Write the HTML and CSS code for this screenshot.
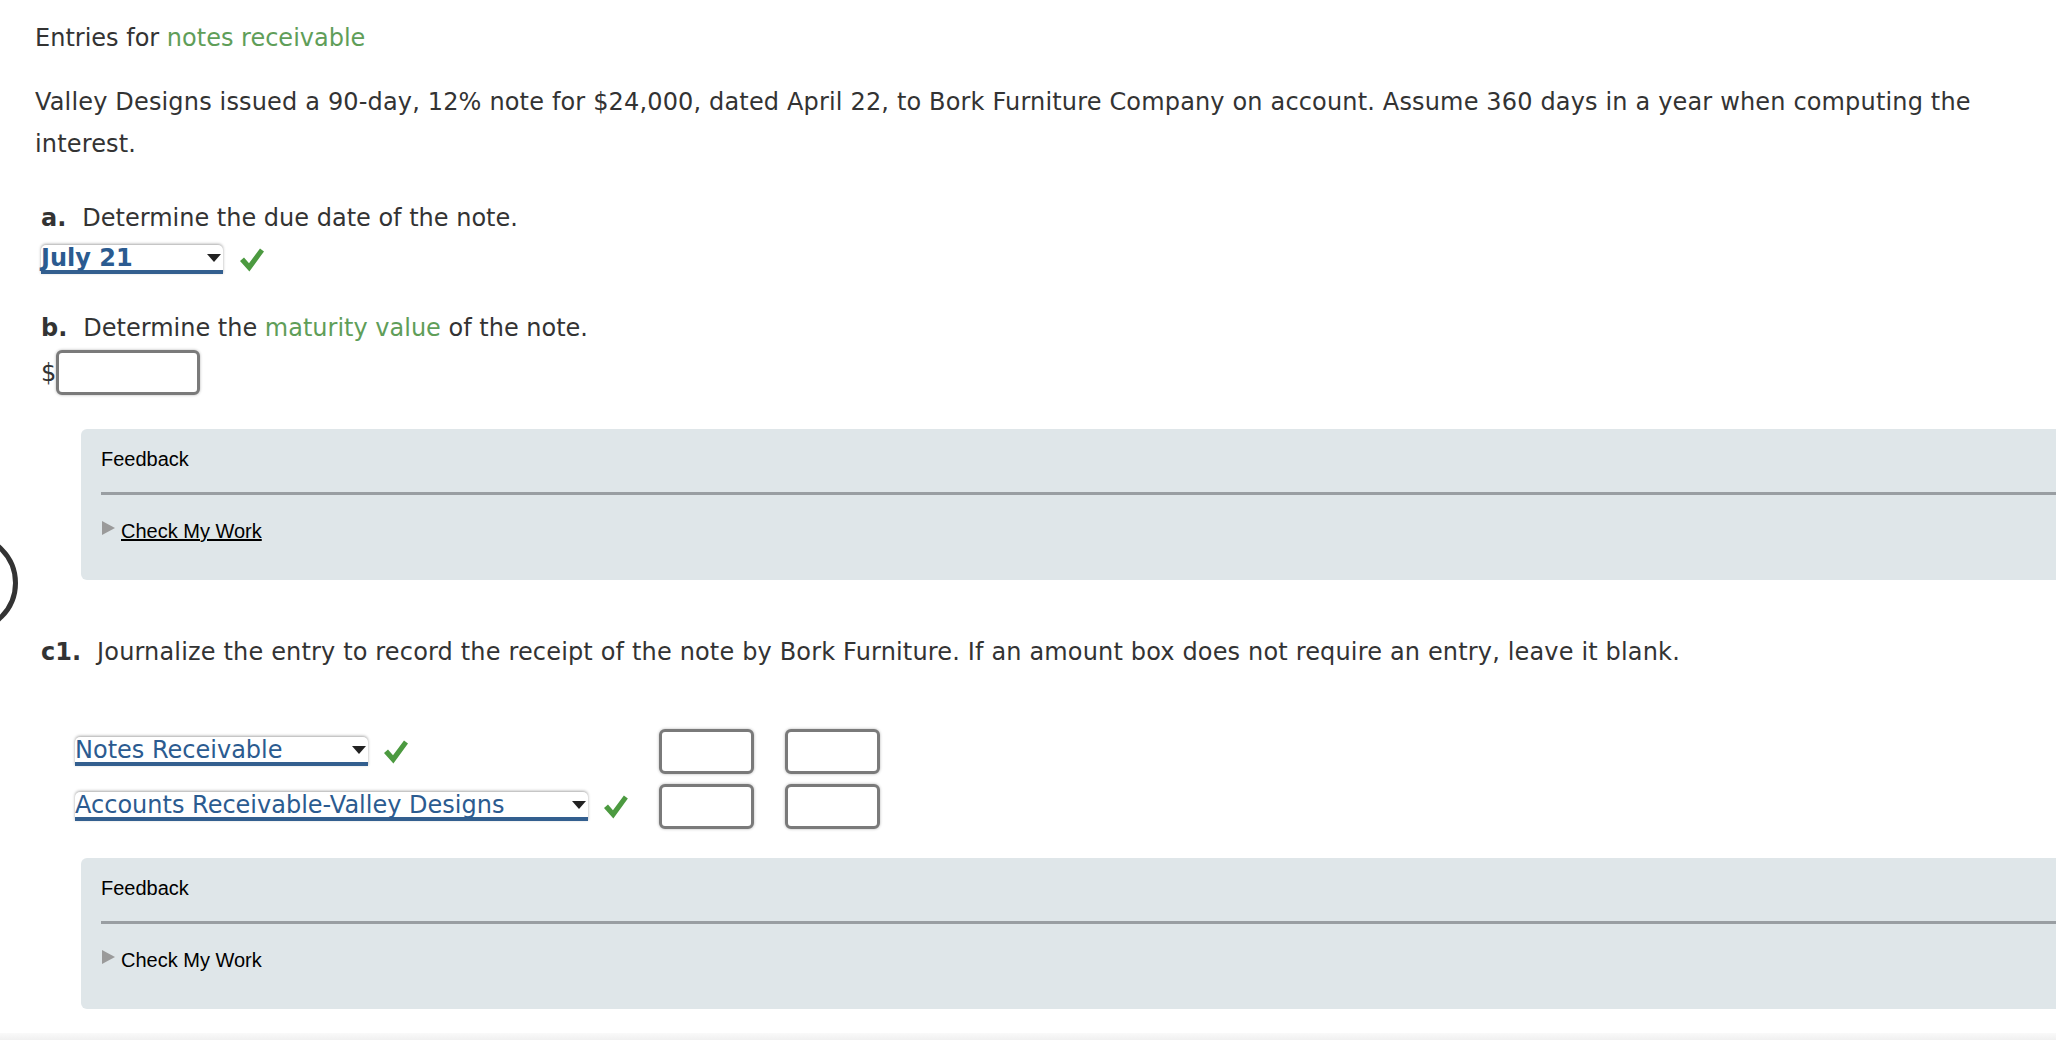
FILE: index.html
```html
<!DOCTYPE html>
<html>
<head>
    <title>Entries for notes receivable</title>
    <link rel="stylesheet" href="styles.css">
</head>
<body>
    <div class="side-button"></div>

    <div class="page">
        <p class="title">Entries for <span class="term">notes receivable</span></p>

        <p class="intro">Valley Designs issued a 90-day, 12% note for $24,000, dated April 22, to Bork Furniture Company on account. Assume 360 days in a year when computing the interest.</p>

        <!-- part a -->
        <p class="prompt prompt-a"><b>a.</b>Determine the due date of the note.</p>
        <div class="answer-row">
            <div class="dropdown dropdown-date"><span class="choice">July 21</span><span class="caret"></span></div>
            <svg class="check" viewBox="0 0 24 24" width="24" height="24"><path d="M0 13 L4 9.6 L9 15.2 L20 0.5 L24 3.4 L9.4 23.5 Z"/></svg>
        </div>

        <!-- part b -->
        <p class="prompt prompt-b"><b>b.</b>Determine the <span class="term">maturity value</span> of the note.</p>
        <div class="money-row">
            <span class="dollar">$</span><input type="text" class="amount amount-wide">
        </div>

        <div class="feedback feedback-b">
            <div class="feedback-title">Feedback</div>
            <div class="feedback-rule"></div>
            <div class="feedback-check"><span class="arrow"></span><a href="#" class="check-link">Check My Work</a></div>
        </div>

        <!-- part c1 -->
        <p class="prompt prompt-c"><b>c1.</b>Journalize the entry to record the receipt of the note by Bork Furniture. If an amount box does not require an entry, leave it blank.</p>

        <div class="journal">
            <div class="journal-row">
                <div class="account">
                    <div class="dropdown dropdown-short"><span class="choice">Notes Receivable</span><span class="caret"></span></div>
                    <svg class="check" viewBox="0 0 24 24" width="24" height="24"><path d="M0 13 L4 9.6 L9 15.2 L20 0.5 L24 3.4 L9.4 23.5 Z"/></svg>
                </div>
                <input type="text" class="amount">
                <input type="text" class="amount">
            </div>
            <div class="journal-row">
                <div class="account">
                    <div class="dropdown dropdown-long"><span class="choice">Accounts Receivable-Valley Designs</span><span class="caret"></span></div>
                    <svg class="check" viewBox="0 0 24 24" width="24" height="24"><path d="M0 13 L4 9.6 L9 15.2 L20 0.5 L24 3.4 L9.4 23.5 Z"/></svg>
                </div>
                <input type="text" class="amount">
                <input type="text" class="amount">
            </div>
        </div>

        <div class="feedback feedback-c">
            <div class="feedback-title">Feedback</div>
            <div class="feedback-rule"></div>
            <div class="feedback-check"><span class="arrow"></span><span class="check-text">Check My Work</span></div>
        </div>

        <div class="bottom-edge"></div>
    </div>
</body>
</html>
```

FILE: styles.css
```css
html, body {
    margin: 0;
    padding: 0;
    overflow: hidden;
    background-color: #fff;
}

body {
    font-family: "DejaVu Sans", Verdana, sans-serif;
    font-size: 24px;
    color: #333;
}

.page {
    padding-left: 35px;
}

p {
    margin: 0;
    line-height: 42px;
}

.title {
    padding-top: 17px;
}

.intro {
    margin-top: 22px;
    padding-right: 20px;
    letter-spacing: 0.16px;
}

.term {
    color: #5f9e59;
}

.prompt {
    margin-left: 6px;
}

.prompt b {
    margin-right: 16px;
}

.prompt-a {
    margin-top: 32px;
}

.prompt-b {
    margin-top: 33px;
}

.prompt-c {
    margin-top: 51px;
    letter-spacing: 0.16px;
}

.prompt-c b {
    letter-spacing: 0;
}

/* dropdowns */
.answer-row {
    display: flex;
    align-items: center;
    margin-top: 6px;
    margin-left: 6px;
}

.dropdown {
    position: relative;
    height: 25px;
    background-color: #fff;
    border-bottom: 4px solid #335f8f;
    border-radius: 5px 5px 0 0;
    box-shadow: 0 -1px 3px rgba(0, 0, 0, 0.35);
    color: #2b5b90;
    line-height: 26px;
    white-space: nowrap;
}

.dropdown-date {
    width: 182px;
    font-weight: bold;
}

.dropdown-short {
    width: 293px;
}

.dropdown-long {
    width: 516px;
}

.choice {
    display: inline-block;
}

.caret {
    position: absolute;
    right: 2px;
    top: 9px;
    width: 0;
    height: 0;
    border-left: 7px solid transparent;
    border-right: 7px solid transparent;
    border-top: 8px solid #222;
}

.check {
    fill: #4c9a40;
    margin-left: 17px;
}

/* amount boxes */
.money-row {
    display: flex;
    align-items: center;
    margin-top: 1px;
    margin-left: 6px;
}

.dollar {
    font-size: 24px;
}

.amount {
    box-sizing: border-box;
    width: 95px;
    height: 45px;
    margin: 0;
    padding: 0;
    border: 3px solid #7a7a7a;
    border-radius: 6px;
    box-shadow: 0 0 3px rgba(0, 0, 0, 0.3);
    background-color: #fff;
}

.amount-wide {
    width: 144px;
}

/* feedback panels */
.feedback {
    margin-left: 46px;
    margin-right: -40px;
    height: 151px;
    box-sizing: border-box;
    padding: 18px 0 0 20px;
    background-color: #dfe6e9;
    border-radius: 6px 0 0 6px;
    font-family: "Liberation Sans", Arial, sans-serif;
    font-size: 20px;
    color: #000;
}

.feedback-b {
    margin-top: 34px;
}

.feedback-c {
    margin-top: 29px;
}

.feedback-title {
    line-height: 24px;
}

.feedback-rule {
    margin-top: 21px;
    height: 3px;
    background-color: #999ea2;
}

.feedback-check {
    display: flex;
    align-items: center;
    margin-top: 24px;
    line-height: 24px;
}

.arrow {
    width: 0;
    height: 0;
    margin-left: 1px;
    margin-right: 6px;
    margin-top: -6px;
    border-top: 7px solid transparent;
    border-bottom: 7px solid transparent;
    border-left: 13px solid #9a9a9a;
    filter: blur(0.6px);
}

.check-link {
    color: #000;
    text-decoration: underline;
}

/* journal */
.journal {
    margin-top: 56px;
    margin-left: 40px;
}

.journal-row {
    display: flex;
    align-items: center;
    gap: 31px;
}

.journal-row + .journal-row {
    margin-top: 10px;
}

.account {
    display: flex;
    align-items: center;
    width: 553px;
}

.account .check {
    margin-left: 16px;
}

/* partial round button at the left edge */
.side-button {
    position: absolute;
    left: -82px;
    top: 533px;
    width: 90px;
    height: 90px;
    border: 5px solid #333;
    border-radius: 50%;
}

.bottom-edge {
    margin-top: 24px;
    margin-left: -35px;
    height: 10px;
    background: linear-gradient(#fafafa, #ececec);
}
```
